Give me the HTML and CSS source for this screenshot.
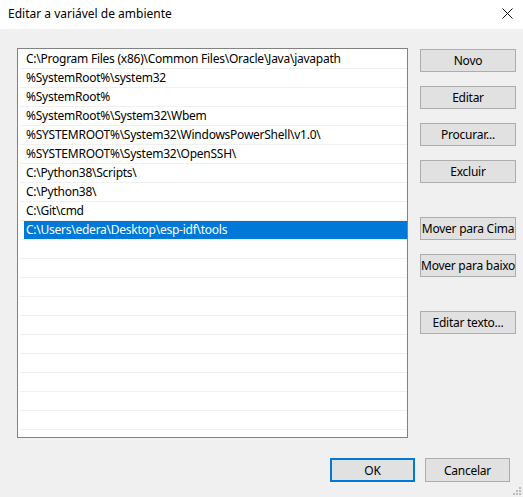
FILE: index.html
```html
<!DOCTYPE html>
<html lang="pt">
<head>
<meta charset="utf-8">
<title>Editar a variável de ambiente</title>
<link rel="stylesheet" href="styles.css">
</head>
<body>
<div class="dialog">
  <div class="titlebar">
    <span class="title">Editar a variável de ambiente</span>
    <svg class="close" width="11" height="11" viewBox="0 0 11 11"><path d="M0.5 0.5 L10.5 10.5 M10.5 0.5 L0.5 10.5" stroke="#111" stroke-width="1" fill="none"/></svg>
  </div>
  <div class="content">
    <div class="main">
      <div class="listbox">
        <div class="row"><span class="cell">C:\Program Files (x86)\Common Files\Oracle\Java\javapath</span></div>
        <div class="row"><span class="cell">%SystemRoot%\system32</span></div>
        <div class="row"><span class="cell">%SystemRoot%</span></div>
        <div class="row"><span class="cell">%SystemRoot%\System32\Wbem</span></div>
        <div class="row"><span class="cell">%SYSTEMROOT%\System32\WindowsPowerShell\v1.0\</span></div>
        <div class="row"><span class="cell">%SYSTEMROOT%\System32\OpenSSH\</span></div>
        <div class="row"><span class="cell">C:\Python38\Scripts\</span></div>
        <div class="row"><span class="cell">C:\Python38\</span></div>
        <div class="row"><span class="cell">C:\Git\cmd</span></div>
        <div class="row"><span class="cell selected">C:\Users\edera\Desktop\esp-idf\tools</span></div>
        <div class="row"><span class="cell"></span></div>
        <div class="row"><span class="cell"></span></div>
        <div class="row"><span class="cell"></span></div>
        <div class="row"><span class="cell"></span></div>
        <div class="row"><span class="cell"></span></div>
        <div class="row"><span class="cell"></span></div>
        <div class="row"><span class="cell"></span></div>
        <div class="row"><span class="cell"></span></div>
        <div class="row"><span class="cell"></span></div>
        <div class="row"><span class="cell"></span></div>
        <div class="row"><span class="cell"></span></div>
      </div>
      <div class="side">
        <button class="btn">Novo</button>
        <button class="btn">Editar</button>
        <button class="btn">Procurar...</button>
        <button class="btn">Excluir</button>
        <button class="btn gap-before">Mover para Cima</button>
        <button class="btn">Mover para baixo</button>
        <button class="btn gap-before">Editar texto...</button>
      </div>
    </div>
    <div class="footer">
      <button class="btn wide default">OK</button>
      <button class="btn wide">Cancelar</button>
    </div>
    <svg class="grip" width="8" height="8" viewBox="0 0 8 8">
      <rect x="6" y="0" width="2" height="2" fill="#bcbcbc"/>
      <rect x="3" y="3" width="2" height="2" fill="#bcbcbc"/>
      <rect x="6" y="3" width="2" height="2" fill="#bcbcbc"/>
      <rect x="0" y="6" width="2" height="2" fill="#bcbcbc"/>
      <rect x="3" y="6" width="2" height="2" fill="#bcbcbc"/>
      <rect x="6" y="6" width="2" height="2" fill="#bcbcbc"/>
    </svg>
  </div>
</div>
</body>
</html>
```

FILE: styles.css
```css
* { box-sizing: border-box; }
html, body {
  margin: 0;
  padding: 0;
  width: 523px;
  height: 497px;
  overflow: hidden;
}
body {
  font-family: "Noto Sans", "Open Sans", Arial, sans-serif;
  font-size: 12px;
  color: #000;
  background: #f0f0f0;
}
.dialog {
  display: flex;
  flex-direction: column;
  width: 523px;
  height: 497px;
}
.titlebar {
  height: 29px;
  background: #fff;
  display: flex;
  align-items: center;
  justify-content: space-between;
  padding: 0 9px 0 8px;
}
.title {
  font-size: 12px;
  color: #000;
  position: relative;
  top: -1px;
}
.close { position: relative; top: -1px; right: 1px; }
.content {
  flex: 1;
  background: #f0f0f0;
  position: relative;
  display: flex;
  flex-direction: column;
}
.main {
  display: flex;
  padding: 19px 0 0 17px;
  gap: 12px;
}
.listbox {
  width: 391px;
  height: 390px;
  border: 1px solid #828282;
  background: #fff;
  padding: 1px 0 0 1px;
  overflow: hidden;
}
.row {
  height: 19px;
  border-bottom: 1px solid #f0f0f0;
  padding-left: 4px;
  padding-right: 0;
  margin-left: 1px;
  display: flex;
}
.cell {
  display: block;
  flex: 1;
  height: 18px;
  line-height: 18px;
  padding-left: 2px;
  white-space: nowrap;
  letter-spacing: -0.25px;
}
.selected {
  background: #0078d7;
  color: #fff;
}
.side {
  display: flex;
  flex-direction: column;
  gap: 14px;
  padding-top: 1px;
}
.btn {
  width: 96px;
  height: 23px;
  background: #e1e1e1;
  border: 1px solid #adadad;
  font-family: "Noto Sans", "Open Sans", Arial, sans-serif;
  font-size: 12px;
  color: #000;
  padding: 0;
  margin: 0;
  white-space: nowrap;
  letter-spacing: -0.25px;
}
.gap-before { margin-top: 20px; }
.footer {
  display: flex;
  justify-content: flex-end;
  gap: 10px;
  padding: 20px 13px 0 0;
}
.wide { width: 85px; height: 24px; }
.default { border: 2px solid #0078d7; }
.grip {
  position: absolute;
  right: 2px;
  bottom: 2px;
}
```
